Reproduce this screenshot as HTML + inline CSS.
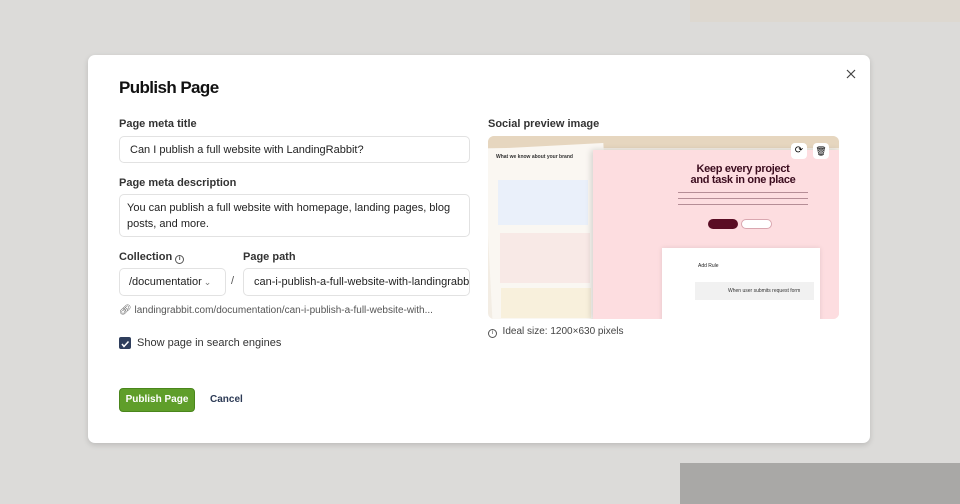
<!DOCTYPE html>
<html><head><meta charset="utf-8"><style>
*{box-sizing:border-box;margin:0;padding:0}
body{width:960px;height:504px;overflow:hidden;background:#dcdbd9;font-family:"Liberation Sans",Arial,sans-serif;position:relative}
.abs{position:absolute}
.modal{left:88px;top:55px;width:782px;height:388px;background:#fff;border-radius:7px;box-shadow:0 2px 6px rgba(0,0,0,.15)}
.lbl{font-size:11px;font-weight:bold;color:#333}
.inp{border:1px solid #e2e2e2;border-radius:5px;background:#fff;font-size:11px;color:#222;padding:0 10px;display:flex;align-items:center;white-space:nowrap;overflow:hidden}
</style></head><body>
<div class="abs" style="left:680px;top:463px;width:280px;height:41px;background:#a9a8a6"></div>
<div class="abs" style="left:690px;top:0;width:270px;height:22px;background:#ddd8d0"></div>
<div class="abs modal">
  <div class="abs" style="left:31px;top:23px;font-size:17px;font-weight:bold;color:#111;letter-spacing:-0.6px">Publish Page</div>
  <svg class="abs" style="left:758px;top:14px" width="10" height="10" viewBox="0 0 10 10"><path d="M1 1L9 9M9 1L1 9" stroke="#444" stroke-width="1.2"/></svg>
  <div class="abs lbl" style="left:31px;top:63px">Page meta title</div>
  <div class="abs inp" style="left:31px;top:81px;width:351px;height:27px">Can I publish a full website with LandingRabbit?</div>
  <div class="abs lbl" style="left:31px;top:122px">Page meta description</div>
  <div class="abs inp" style="left:31px;top:139px;width:351px;height:43px;white-space:normal;line-height:16px;padding:0 7px">You can publish a full website with homepage, landing pages, blog posts, and more.</div>
  <div class="abs lbl" style="left:31px;top:196px">Collection <span style="display:inline-block;width:9px;height:9px;border:1px solid #555;border-radius:50%;font-size:6px;text-align:center;line-height:7px;vertical-align:0">i</span></div>
  <div class="abs lbl" style="left:155px;top:196px">Page path</div>
  <div class="abs inp" style="left:31px;top:213px;width:107px;height:28px;padding:0 9px">/documentatior <span style="color:#777;margin-left:2px;font-size:9px">&#8964;</span></div>
  <div class="abs" style="left:143px;top:220px;font-size:11px;color:#555">/</div>
  <div class="abs inp" style="left:155px;top:213px;width:227px;height:28px">can-i-publish-a-full-website-with-landingrabbit</div>
  <div class="abs" style="left:31px;top:250px;font-size:10px;color:#555">&#128279;&#xFE0E; landingrabbit.com/documentation/can-i-publish-a-full-website-with...</div>
  <div class="abs" style="left:31px;top:282px;width:12px;height:12px;background:#2f3e5c;border-radius:2px"><svg width="12" height="12"><path d="M3 6L5 8.5L9.5 3.5" stroke="#fff" stroke-width="1.5" fill="none"/></svg></div>
  <div class="abs" style="left:49px;top:282px;font-size:11px;color:#333">Show page in search engines</div>
  <div class="abs" style="left:31px;top:333px;width:76px;height:24px;background:#5f9e2a;border:1px solid #4a861c;border-radius:4px;color:#fff;font-size:10px;font-weight:bold;text-align:center;line-height:22px">Publish Page</div>
  <div class="abs" style="left:122px;top:339px;font-size:10px;font-weight:bold;color:#2c3a55">Cancel</div>
  <div class="abs lbl" style="left:400px;top:63px">Social preview image</div>
  <div class="abs" style="left:400px;top:81px;width:351px;height:183px;border-radius:6px;overflow:hidden;background:#f3ede4">
    <div class="abs" style="left:0;top:0;width:351px;height:12px;background:#e6d6bf"></div>
    <div class="abs" style="left:0;top:10px;width:120px;height:175px;background:#faf7f2;transform:rotate(-3deg)"></div>
    <div class="abs" style="left:8px;top:18px;font-size:5px;font-weight:bold;color:#333">What we know about your brand</div>
    <div class="abs" style="left:10px;top:44px;width:90px;height:45px;background:#eaf0fa"></div>
    <div class="abs" style="left:12px;top:97px;width:90px;height:50px;background:#f8e9e6"></div>
    <div class="abs" style="left:13px;top:152px;width:90px;height:30px;background:#f8f0dc"></div>
    <div class="abs" style="left:105px;top:14px;width:246px;height:170px;background:#fddde0;box-shadow:-2px 0 6px rgba(0,0,0,.15)"></div>
    <div class="abs" style="left:170px;top:28px;width:170px;text-align:center;font-size:11px;font-weight:bold;color:#3c0d1f;line-height:11px;letter-spacing:-.3px">Keep every project<br>and task in one place</div>
    <div class="abs" style="left:190px;top:54px;width:130px;height:20px;background:repeating-linear-gradient(#fddde0 0 2px,#b58d96 2px 3px,#fddde0 3px 6px)"></div>
    <div class="abs" style="left:220px;top:83px;width:30px;height:10px;background:#5a0d24;border-radius:5px"></div>
    <div class="abs" style="left:253px;top:83px;width:31px;height:10px;background:#fff;border:1px solid #d9a7b0;border-radius:5px"></div>
    <div class="abs" style="left:174px;top:112px;width:158px;height:75px;background:#fff;box-shadow:0 0 5px rgba(0,0,0,.1)"></div>
    <div class="abs" style="left:210px;top:127px;font-size:5px;color:#222">Add Rule</div>
    <div class="abs" style="left:207px;top:146px;width:119px;height:18px;background:#f1f1f1;font-size:5px;color:#333;padding:6px 0 0 33px">When user submits request form</div>
    <div class="abs" style="left:303px;top:7px;width:16px;height:16px;background:#fff;border-radius:4px;font-size:10px;text-align:center;line-height:16px">&#10227;</div>
    <div class="abs" style="left:325px;top:7px;width:16px;height:16px;background:#fff;border-radius:4px;font-size:9px;text-align:center;line-height:16px">&#128465;&#xFE0E;</div>
  </div>
  <div class="abs" style="left:400px;top:271px;font-size:10px;color:#444"><span style="display:inline-block;width:9px;height:9px;border:1px solid #555;border-radius:50%;font-size:6px;text-align:center;line-height:7px">i</span>&nbsp; Ideal size: 1200×630 pixels</div>
</div>
</body></html>
